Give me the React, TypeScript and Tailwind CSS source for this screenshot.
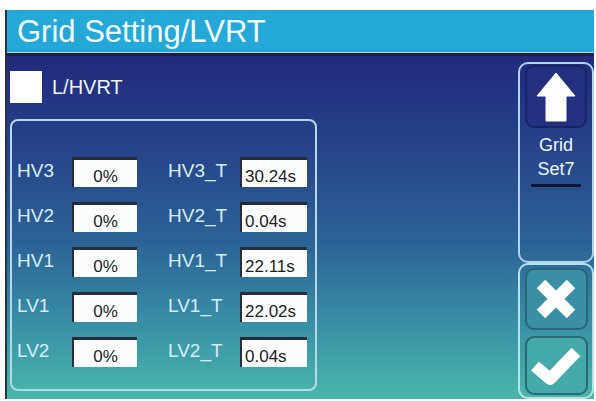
const rows = [
  { name: "HV3", pct: "0%", time: "30.24s" },
  { name: "HV2", pct: "0%", time: "0.04s" },
  { name: "HV1", pct: "0%", time: "22.11s" },
  { name: "LV1", pct: "0%", time: "22.02s" },
  { name: "LV2", pct: "0%", time: "0.04s" },
];

function ValueBox({ children, className = "" }: { children: string; className?: string }) {
  return (
    <div
      className={`flex h-[30px] items-end border-t-[3px] border-l-2 border-t-[#262c3a] border-l-[#262c3a] bg-[#fbfdfd] pb-[2px] text-[17px] leading-none text-[#1d1d1d] ${className}`}
    >
      {children}
    </div>
  );
}

function UpArrow() {
  return (
    <svg width="40" height="50" viewBox="0 0 40 50">
      <path d="M20 1 L39 24 L30 24 L30 49 L10 49 L10 24 L1 24 Z" fill="#ffffff" strokeLinejoin="round" stroke="#ffffff" strokeWidth="1" />
    </svg>
  );
}

function CrossIcon() {
  return (
    <svg width="40" height="40" viewBox="0 0 40 40">
      <path d="M5 5 L35 35 M35 5 L5 35" stroke="#ffffff" strokeWidth="12" strokeLinecap="butt" />
    </svg>
  );
}

function CheckIcon() {
  return (
    <svg width="50" height="42" viewBox="0 0 50 42">
      <path d="M4 21 L19 34 L45 7" fill="none" stroke="#ffffff" strokeWidth="12" strokeLinecap="butt" strokeLinejoin="round" />
    </svg>
  );
}

export default function App() {
  return (
    <div className="h-[401px] w-[596px] overflow-hidden bg-white pt-[10px] pl-[5px] pr-[2px] font-['Liberation_Sans',Arial,sans-serif]">
      <div className="flex h-[389px] flex-col border-l-2 border-[#2a3340]">
        <header className="flex h-[42px] items-center bg-[#23a8d7] pl-[10px] text-[31px] leading-none text-[#f2fbff]">
          Grid Setting/LVRT
        </header>
        <div className="h-px bg-[#c4d4dc]" />
        <div className="h-[3px] bg-[#1c2142]" />
        <main className="flex flex-1 bg-[linear-gradient(180deg,#212a7c_0%,#264189_25%,#2c6497_55%,#3a93a6_80%,#4ab7ab_100%)]">
          <section className="flex w-[310px] flex-col pl-[3px] pt-[15px]">
            <div className="flex h-[32px] items-center gap-[10px]">
              <div className="h-[32px] w-[32px] bg-white" />
              <span className="text-[20px] leading-none text-[#eef6ff]">L/HVRT</span>
            </div>
            <div className="mt-[16px] h-[272px] rounded-[8px] border-2 border-[#b6d8ea] pt-[36px] pl-[5px]">
              <div className="flex flex-col gap-[15px]">
                {rows.map((row) => (
                  <div key={row.name} className="flex h-[30px] items-center text-[19px] leading-none text-[#d8eefc]">
                    <span className="w-[55px] -translate-y-[2px]">{row.name}</span>
                    <ValueBox className="w-[65px] justify-center">{row.pct}</ValueBox>
                    <span className="w-[72px] -translate-y-[2px] pl-[31px] box-content">{row.name}_T</span>
                    <ValueBox className="w-[67px] pl-[3px]">{row.time}</ValueBox>
                  </div>
                ))}
              </div>
            </div>
          </section>
          <aside className="ml-auto flex w-[76px] flex-col pt-[6px]">
            <div className="flex h-[201px] flex-col items-center rounded-[10px] border-2 border-[#b3d4ea] pt-[1px]">
              <button className="flex h-[63px] w-[62px] items-center justify-center rounded-[9px] border-2 border-[#1a2566] bg-[#22307f]">
                <UpArrow />
              </button>
              <div className="mt-[5px] text-center text-[18px] leading-[24px] text-[#eef6ff]">
                Grid
                <br />
                Set7
              </div>
              <div className="mt-[3px] h-[3px] w-[50px] bg-[#101830]" />
            </div>
            <div className="flex flex-1 flex-col items-center gap-[6px] rounded-[10px] border-2 border-[#b8e2ea] pt-[3px]">
              <button className="flex h-[62px] w-[63px] items-center justify-center rounded-[9px] border-2 border-[#2b6377] bg-[#3b8fa5]">
                <CrossIcon />
              </button>
              <button className="flex h-[59px] w-[63px] items-center justify-center rounded-[9px] border-2 border-[#2c6775] bg-[#44a9a9]">
                <CheckIcon />
              </button>
            </div>
          </aside>
        </main>
      </div>
    </div>
  );
}
